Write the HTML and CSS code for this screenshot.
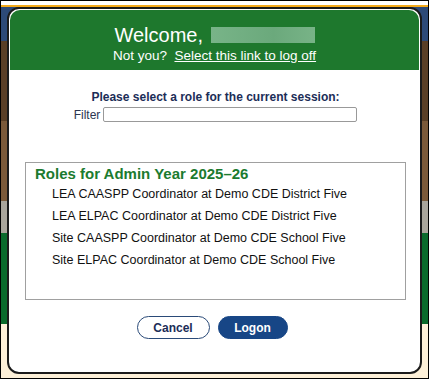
FILE: index.html
```html
<!DOCTYPE html>
<html lang="en">
<head>
  <meta charset="UTF-8" />
  <meta name="viewport" content="width=device-width, initial-scale=1.0" />
  <title>Select Role</title>
  <link rel="stylesheet" href="styles.css">
</head>
<body>
  <div class="screen">
    <div class="modal">
      <div class="modal-head">
        <div class="welcome">Welcome, <span class="name-blur"></span></div>
        <div class="not-you">Not you? &nbsp;<a href="#">Select this link to log off</a></div>
      </div>

      <div class="modal-body">
        <p class="prompt">Please select a role for the current session:</p>
        <div class="filter-row">
          <label for="filter">Filter</label>
          <input type="text" id="filter" />
        </div>

        <div class="roles">
          <h2>Roles for Admin Year 2025–26</h2>
          <ul>
            <li>LEA CAASPP Coordinator at Demo CDE District Five</li>
            <li>LEA ELPAC Coordinator at Demo CDE District Five</li>
            <li>Site CAASPP Coordinator at Demo CDE School Five</li>
            <li>Site ELPAC Coordinator at Demo CDE School Five</li>
          </ul>
        </div>

        <div class="actions">
          <button type="button" class="btn btn-cancel">Cancel</button>
          <button type="button" class="btn btn-logon">Logon</button>
        </div>
      </div>
    </div>
  </div>
</body>
</html>
```

FILE: styles.css
```css
* { box-sizing: border-box; }
html, body { margin: 0; padding: 0; }
body { font-family: "Liberation Sans", Arial, sans-serif; background: #fdf0d8; }

.screen {
  width: 429px; height: 379px; border: 1px solid #000; padding: 6px 0 0 6px;
  background:
    linear-gradient(to bottom, #fff 0 4px, #f2a91a 4px 6px, transparent 6px),
    linear-gradient(to bottom, #2d4a78 0 40px, #5a3f26 40px 120px, #7b5a3a 120px 200px, #a9a59b 200px 232px, #0a6a2c 232px 323px, #fdf0d8 323px);
}

.modal {
  width: 415px; height: 367px; background: #fff; border: 2px solid #1b1b1b;
  border-radius: 12px; padding: 1px; overflow: hidden;
}

.modal-head { background: #1e782d; color: #fff; text-align: center; border-radius: 10px 10px 0 0; padding: 12px 0 6px; }
.welcome { font-size: 20px; line-height: 26px; }
.name-blur { display: inline-block; width: 104px; height: 16px; margin-left: 2px; vertical-align: -1px; background: linear-gradient(90deg, #78b488, #6ba97c 60%, #78b387); }
.not-you { font-size: 13.5px; line-height: 16px; }
.not-you a { color: #fff; }

.modal-body { padding: 20px 13px 0 15px; }
.prompt { margin: 0; text-align: center; font-size: 12px; line-height: 15px; font-weight: bold; color: #1c2d57; }
.filter-row { display: flex; justify-content: center; align-items: center; gap: 3px; margin-top: 2px; font-size: 12px; color: #2b3550; }
.filter-row input { width: 254px; height: 15px; padding: 0 3px; border: 1px solid #999; border-radius: 2px; font: inherit; }

.roles { margin-top: 40px; height: 138px; border: 1px solid #a0a0a0; padding: 2px 9px 0; }
.roles h2 { margin: 0; font-size: 15px; line-height: 18px; color: #1b7b2f; }
.roles ul { list-style: none; margin: 0; padding: 0 0 0 17px; }
.roles li { font-size: 12.5px; line-height: 22px; color: #111; }

.actions { display: flex; justify-content: center; gap: 8px; margin-top: 16px; padding-right: 7px; }
.btn { height: 23px; border-radius: 12px; font-family: inherit; font-size: 12px; font-weight: bold; cursor: pointer; padding: 0; }
.btn-cancel { width: 73px; background: #fff; color: #1c2d57; border: 1px solid #2a4a78; }
.btn-logon { width: 70px; background: #174686; color: #fff; border: 1px solid #174686; }
```
